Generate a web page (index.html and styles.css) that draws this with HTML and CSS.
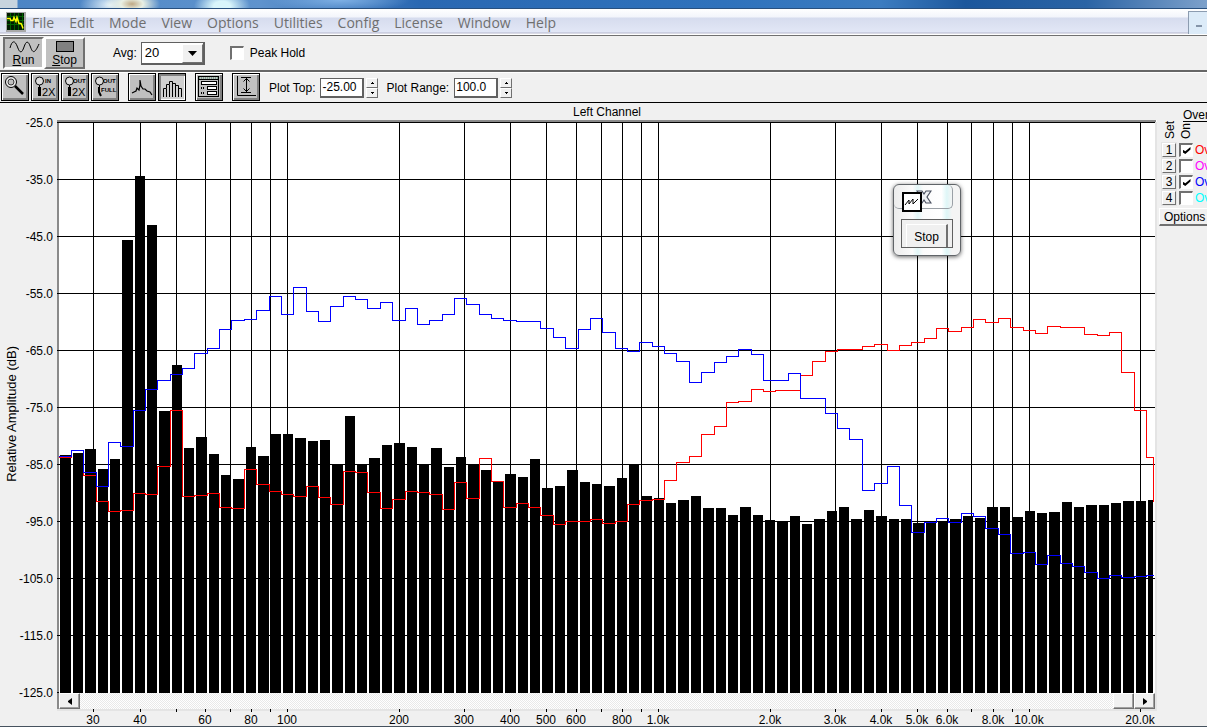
FILE: index.html
```html
<!DOCTYPE html>
<html lang="en">
<head>
<meta charset="utf-8">
<title>Spectrum Analyzer</title>
<link rel="stylesheet" href="styles.css">
</head>
<body>
<div class="app">
  <div class="titlebar"></div>
  <nav class="menubar">
    <svg class="app-icon" width="20" height="20" viewBox="0 0 20 20" aria-hidden="true">
      <rect width="20" height="20" fill="#a8a8a8"/><rect x="1" y="1" width="17" height="17" fill="#001a00"/>
      <path d="M4.500 1v17M8.500 1v17M12.500 1v17M16.500 1v17M1 4.500h17M1 8.500h17M1 12.500h17" stroke="#006000" fill="none"/>
      <path d="M1 6.500h3l1 2h2l1 -3l2 4l1 -4l2 6h2l1 2l1 3" stroke="#ffff00" stroke-width="1.500" fill="none"/>
    </svg>
    <a href="#file">File</a><a href="#edit">Edit</a><a href="#mode">Mode</a><a href="#view">View</a><a href="#options">Options</a><a href="#utilities">Utilities</a><a href="#config">Config</a><a href="#license">License</a><a href="#window">Window</a><a href="#help">Help</a>
    <button class="minimize" aria-label="Minimize"><span></span></button>
  </nav>

  <div class="toolbar run-bar">
    <button class="big-btn pressed">
      <svg width="32" height="15" viewBox="0 0 32 15" aria-hidden="true"><path d="M2 9C4 1 7 1 9.500 8S14 14 16 8S20 1 22.500 8S27 14 31 5" fill="none" stroke="#000"/></svg>
      <span><u>R</u>un</span>
    </button>
    <button class="big-btn">
      <svg width="32" height="15" viewBox="0 0 32 15" aria-hidden="true"><rect x="7.500" y="2.500" width="17" height="10" fill="#808080" stroke="#000"/></svg>
      <span><u>S</u>top</span>
    </button>
    <label class="avg-label" for="avg">Avg:</label>
    <span class="combo">
      <select id="avg"><option>20</option></select>
      <span class="combo-arrow"><svg width="9" height="5" viewBox="0 0 9 5"><path d="M0 0h9L4.500 5z"/></svg></span>
    </span>
    <label class="peak"><input type="checkbox" class="check">Peak Hold</label>
  </div>

  <div class="toolbar tool-bar">
    <div class="group">
      <button class="tool" aria-label="Zoom"><svg viewBox="0 0 26 26"><circle cx="9" cy="8" r="5.500" fill="#e8e8e8" stroke="#000"/><circle cx="9" cy="8" r="3" fill="#c0c0c0" stroke="#000" stroke-width=".7"/><path d="M13 12l8 8" stroke="#000" stroke-width="2.500"/></svg></button>
      <button class="tool" aria-label="Zoom in 2X"><svg viewBox="0 0 26 26"><circle cx="7.500" cy="7" r="4" fill="#ddd" stroke="#000"/><path d="M7.500 11v3" stroke="#000"/><path d="M7.500 13v9" stroke="#000" stroke-width="3"/><text class="tiny" x="13" y="9">IN</text><text class="big" x="10" y="22">2X</text></svg></button>
      <button class="tool" aria-label="Zoom out 2X"><svg viewBox="0 0 26 26"><circle cx="7.500" cy="7" r="4" fill="#ddd" stroke="#000"/><path d="M7.500 11v3" stroke="#000"/><path d="M7.500 13v9" stroke="#000" stroke-width="3"/><text class="tiny" x="11" y="9">OUT</text><text class="big" x="10" y="22">2X</text></svg></button>
      <button class="tool" aria-label="Zoom out full"><svg viewBox="0 0 26 26"><circle cx="7.500" cy="7" r="4" fill="#ddd" stroke="#000"/><path d="M7.500 11v3" stroke="#000"/><path d="M7 13v5l2 4" stroke="#000" stroke-width="2" fill="none"/><text class="tiny" x="11" y="9">OUT</text><text class="tiny" x="9" y="18">FULL</text></svg></button>
    </div>
    <div class="group">
      <button class="tool" aria-label="Line plot"><svg viewBox="0 0 26 26"><path d="M3 19l2-1l2-1l1-3l2 2l1-5V6l1 6l2 3h2l2 2l3 1l2 3" fill="none" stroke="#000" stroke-width="1.200"/></svg></button>
      <button class="tool pressed" aria-label="Bar plot"><svg viewBox="0 0 26 26"><path d="M4.500 23V14.500H7.500V23M7.500 14V10.500H10.500V23M10.500 10V7.500H13.500V23M13.500 9.500H16.500V23M16.500 11.500H19.500V23M19.500 14.500H22.500V23" fill="none" stroke="#000"/></svg></button>
    </div>
    <div class="group">
      <button class="tool" aria-label="Settings"><svg viewBox="0 0 26 26"><rect x="2.500" y="2.500" width="20" height="20" fill="#c0c0c0" stroke="#000"/><path d="M3 4h19" stroke="#7f9f8f" stroke-width="2" stroke-dasharray="1 1"/><path d="M3 5.500h19" stroke="#000"/><g fill="#fff" stroke="#000"><rect x="5.500" y="7.500" width="15" height="3"/><rect x="11.500" y="12.500" width="9" height="3"/><rect x="11.500" y="17.500" width="9" height="3"/></g><path d="M5 14h4M5 19h4" stroke="#000" stroke-width="2" stroke-dasharray="1 1"/></svg></button>
    </div>
    <div class="group">
      <button class="tool" aria-label="Fit vertical range"><svg viewBox="0 0 26 26"><path d="M4.500 2V21.500H23M8 3.500H18M8 18.500H18M13.500 4v14M10.500 7.500l3-3l3 3M10.500 14.500l3 3l3-3" fill="none" stroke="#000"/></svg></button>
    </div>
    <div class="field">
      <label for="top">Plot Top:</label><input id="top" type="text" value="-25.00">
      <span class="spin"><button aria-label="Raise plot top"><svg width="3" height="2" viewBox="0 0 3 2"><path d="M1 0h1v1h1v1H0V1h1z"/></svg></button><button aria-label="Lower plot top"><svg width="3" height="2" viewBox="0 0 3 2"><path d="M0 0h3v1H2v1H1V1H0z"/></svg></button></span>
    </div>
    <div class="field">
      <label for="range">Plot Range:</label><input id="range" type="text" value="100.0">
      <span class="spin"><button aria-label="Raise plot range"><svg width="3" height="2" viewBox="0 0 3 2"><path d="M1 0h1v1h1v1H0V1h1z"/></svg></button><button aria-label="Lower plot range"><svg width="3" height="2" viewBox="0 0 3 2"><path d="M0 0h3v1H2v1H1V1H0z"/></svg></button></span>
    </div>
  </div>

  <main class="workspace">
    <div class="y-axis">
      <div class="y-title">Relative Amplitude (dB)</div>
      <div class="y-labels"><span>-25.0</span><span>-35.0</span><span>-45.0</span><span>-55.0</span><span>-65.0</span><span>-75.0</span><span>-85.0</span><span>-95.0</span><span>-105.0</span><span>-115.0</span><span>-125.0</span></div>
    </div>
    <section class="chart">
      <h1 class="chart-title">Left Channel</h1>
      <div class="plot"><svg id="plot" viewBox="57 120 1100 573" preserveAspectRatio="none" shape-rendering="crispEdges"></svg></div>
      <div class="scrollbar">
        <button class="scroll-btn" aria-label="Scroll left"><svg width="4" height="7" viewBox="0 0 4 7"><path d="M4 0v7L0 4V3z"/></svg></button>
        <div class="track"><div class="thumb"></div></div>
        <button class="scroll-btn" aria-label="Scroll right"><svg width="4" height="7" viewBox="0 0 4 7"><path d="M0 0v7l4-3V3z"/></svg></button>
      </div>
      <svg id="xaxis" class="x-axis"></svg>

      <div class="dialog" role="dialog" aria-label="Generator">
        <div class="dialog-title">
          <svg class="wave" width="20" height="20" viewBox="0 0 20 20" aria-hidden="true"><rect x="1" y="1" width="18" height="18" fill="#fff" stroke="#000" stroke-width="2"/><path d="M3 13l4-5v4l4-5v5l5-5" fill="none" stroke="#000"/></svg>
          <button class="close" aria-label="Close"><svg width="16" height="14" viewBox="0 0 16 14"><path d="M1 1h5l2 3l2-3h5l-4 6l4 6h-5l-2-3l-2 3H1l4-6z" fill="#eef0f4" stroke="#4a5060" stroke-width="1.200"/></svg></button>
        </div>
        <div class="dialog-body"><button>Stop</button></div>
      </div>
    </section>
    <aside class="overlays">
      <div class="ov-title">Over</div>
      <div class="ov-heads"><span>Set</span><span>On</span></div>
      <div class="ov-row"><button>1</button><label class="red"><input type="checkbox" class="check" checked>Ov</label></div>
      <div class="ov-row"><button>2</button><label class="magenta"><input type="checkbox" class="check">Ov</label></div>
      <div class="ov-row"><button>3</button><label class="blue"><input type="checkbox" class="check" checked>Ov</label></div>
      <div class="ov-row"><button>4</button><label class="cyan"><input type="checkbox" class="check">Ov</label></div>
      <button class="ov-options">Options</button>
    </aside>
  </main>
</div>
<script src="chart.js"></script>
</body>
</html>
```

FILE: styles.css
```css
* { box-sizing: border-box; }
body {
  margin: 0;
  background: #f0f0f0;
  color: #000;
  font: 12px/14px "Liberation Sans", Arial, sans-serif;
  overflow: hidden;
}
button, input, select { font: inherit; color: inherit; margin: 0; padding: 0; border-radius: 0; }
.app { display: flex; flex-direction: column; height: 100vh; border-bottom: 1px solid #46525e; }

.titlebar {
  flex: none;
  height: 9px;
  background:
    linear-gradient(90deg, #c8d4de 0 17px, transparent 18px),
    radial-gradient(ellipse 28px 14px at 132px 4px, #bfa985 0, #e9f0e4 40%, transparent 100%),
    radial-gradient(ellipse 30px 16px at 110px 5px, #e4f2fa 0, transparent 100%),
    radial-gradient(ellipse 28px 16px at 222px 6px, #d9f5fb 30%, transparent 100%),
    radial-gradient(ellipse 70px 12px at 340px 0, #7fb0e4 0, transparent 100%),
    linear-gradient(90deg, #4b84c4 0, #5f93cd 260px, #2a68b2 420px, #2f72bc 60%, #3c7cc0 73%, #1c579c 80%, #2b64a5 90%, #7da1cb 100%);
  border-bottom: 1px solid #28507f;
}

.menubar {
  flex: none;
  display: flex;
  align-items: center;
  height: 27px;
  padding-left: 6px;
  background: linear-gradient(#fff 0, #f3f5fb 8px, #d6dcee 9px, #e2e7f6 23px, #b4b6cc 24px, #fff 25px);
  border-bottom: 1px solid #707070;
}
.menubar a {
  padding: 2px 7px 0 8px;
  color: #6f6f6f;
  font: 14px/20px "Open Sans", "Noto Sans", sans-serif;
  text-decoration: none;
}
.app-icon { margin-right: -2px; }
.minimize {
  align-self: flex-start;
  width: 19px;
  height: 23px;
  margin: 2px 0 0 auto;
  padding: 6px 0 0 7px;
  background: #dcebf8;
  border: 1px solid #8c9cb0;
  border-width: 1px 0 0 1px;
}
.minimize span { display: block; width: 6px; height: 2px; background: #8494a8; }

.toolbar { flex: none; display: flex; align-items: center; }
.run-bar { height: 36px; padding: 0 3px; border-bottom: 2px solid #666; }
.tool-bar { height: 31px; padding-left: 1px; border-top: 1px solid #fff; border-bottom: 1px solid #000; align-items: flex-start; }
.big-btn {
  display: flex;
  flex-direction: column;
  align-items: center;
  width: 41px;
  height: 32px;
  background: #c0c0c0;
  border: 2px solid;
  border-color: #fff #707070 #707070 #fff;
}
.big-btn.pressed { border-color: #707070 #fff #fff #707070; }
.big-btn svg { flex: none; }
.big-btn span { line-height: 13px; }
.avg-label { margin: 0 4px 0 28px; }
.combo { position: relative; width: 64px; height: 23px; }
.combo select {
  appearance: none;
  width: 100%;
  height: 100%;
  padding-left: 3px;
  font-size: 13px;
  background: #fff;
  border: 1px solid #606060;
  border-width: 1px 2px 2px 1px;
}
.combo-arrow {
  position: absolute;
  top: 2px;
  right: 2px;
  display: grid;
  place-items: center;
  width: 21px;
  height: 19px;
  background: #f0f0f0;
  border: 1px solid;
  border-color: #fff #707070 #707070 #fff;
  pointer-events: none;
}
.peak { display: flex; align-items: center; gap: 6px; margin-left: 25px; }
.check {
  appearance: none;
  display: grid;
  place-items: center;
  flex: none;
  width: 14px;
  height: 14px;
  background: #fff;
  border: 1px solid;
  border-width: 2px 1px 1px 2px;
  border-color: #707070 #fff #fff #707070;
}
.check:checked::before {
  content: "";
  width: 8px;
  height: 7px;
  background: #000;
  clip-path: polygon(0 35%, 35% 60%, 100% 0, 100% 35%, 35% 100%, 0 75%);
}

.group { display: flex; gap: 2px; margin-right: 9px; }
.tool { width: 28px; height: 28px; background: #c0c0c0; border: 1px solid #000; box-shadow: inset 1px 1px #fff, inset -2px -2px #808080; }
.tool.pressed { box-shadow: inset 2px 2px #808080, inset -1px -1px #fff; background: #d0d0d0; }
.tool svg { display: block; width: 26px; height: 26px; }
.tiny { font-size: 6px; font-weight: bold; }
.big { font-size: 11px; }
.field { display: flex; align-items: center; align-self: center; margin-right: 8px; }
.field input { width: 44px; height: 20px; margin: 0 2px 0 5px; padding-left: 1px; background: #fff; border: 1px solid #606060; border-width: 1px 2px 2px 1px; }
.spin { display: flex; flex-direction: column; }
.spin button {
  display: grid;
  place-items: center;
  width: 12px;
  height: 10px;
  background: #f0f0f0;
  border: 1px solid;
  border-color: #fff #707070 #707070 #fff;
}

.workspace { flex: 1; display: grid; grid-template-columns: 57px minmax(0, 1fr) 50px; min-height: 0; }
.y-axis { display: flex; justify-content: space-between; padding: 13px 4px 26px 5px; }
.y-title { align-self: center; padding-bottom: 12px; writing-mode: vertical-rl; transform: rotate(180deg); font-size: 13px; line-height: 14px; white-space: nowrap; }
.y-labels { display: flex; flex-direction: column; justify-content: space-between; text-align: right; width: 34px; }
.y-labels span { align-self: flex-end; }

.chart { position: relative; display: flex; flex-direction: column; min-height: 0; }
.chart-title { flex: none; height: 17px; margin: 0; padding-top: 2px; font-size: 12px; font-weight: normal; line-height: 14px; text-align: center; }
.plot { flex: 1; min-height: 0; }
.plot svg { display: block; width: 100%; height: 100%; }
.scrollbar { flex: none; display: flex; height: 16px; border: 2px solid; border-width: 0 2px; border-color: #8a8a8a #e4e4e4 #e4e4e4 #8a8a8a; }
.scroll-btn, .thumb { display: grid; place-items: center; width: 21px; height: 16px; background: #f0f0f0; border: 1px solid; border-color: #fff #707070 #707070 #fff; box-shadow: inset -1px -1px #a0a0a0; }
.track { flex: 1; display: flex; justify-content: flex-end; background: repeating-conic-gradient(#e9e9e9 0 25%, #fff 0 50%) 0 0 / 2px 2px; }
.x-axis { flex: none; display: block; width: 100%; height: 17px; overflow: visible; }

.dialog {
  position: absolute;
  top: 81px;
  right: 196px;
  width: 68px;
  height: 72px;
  background: linear-gradient(90deg, #ececec, #fbfbfb 28%, #e2f6f7 36%, #fbfbfb 44%, #fff 72%, #def6f7 80%, #f4f4f4 88%);
  border: 1px solid #606468;
  border-radius: 6px;
  box-shadow: 0 1px 4px rgb(0 0 0 / 60%);
}
.dialog-title { display: flex; align-items: flex-start; width: 59px; height: 24px; border: 1px solid #9aa0a6; border-width: 0 1px 1px 0; border-radius: 5px; padding: 5px 0 0 8px; }
.wave { position: relative; z-index: 1; margin-top: 2px; margin-right: -6px; flex: none; }
.close { border: 0; background: none; line-height: 0; }
.dialog-body { width: 52px; height: 29px; margin: 10px 0 0 7px; padding: 4px 4px 0; background: #f0f0f0; border: 1px solid #606060; }
.dialog-body button { width: 42px; height: 23px; padding-top: 2px; background: #f0f0f0; border: 1px solid; border-width: 1px 2px 0 1px; border-color: #fff #707070 #707070 #fff; }

.overlays { overflow: hidden; padding: 5px 0 0 2px; }
.ov-title { margin-left: 24px; height: 14px; border-bottom: 1px solid #000; }
.ov-heads { display: flex; align-items: flex-end; gap: 2px; height: 17px; padding-left: 4px; margin-bottom: 3px; }
.ov-heads span { writing-mode: vertical-rl; transform: rotate(180deg); width: 14px; }
.ov-row { display: flex; align-items: center; gap: 3px; height: 16px; padding-left: 3px; }
.ov-row button { flex: none; width: 14px; height: 14px; line-height: 12px; background: #f0f0f0; border: 1px solid; border-color: #fff #707070 #707070 #fff; box-shadow: 0 0 0 1px #e4e4e4; }
.ov-row label { display: flex; align-items: center; gap: 2px; }
.red { color: #f00; }
.magenta { color: #f0f; }
.blue { color: #00f; }
.cyan { color: #0ff; }
.ov-options { display: block; width: 60px; height: 18px; margin-top: 2px; padding-left: 4px; text-align: left; background: #f0f0f0; border: 1px solid; border-width: 1px 2px 2px 1px; border-color: #fff #707070 #707070 #fff; }
```

FILE: chart.js
```js
const NS = "http://www.w3.org/2000/svg";
const LEFT = 57, RIGHT = 1157, BOTTOM = 693;

const bars = [455,453,449,469,459,240,176,225,411,365,448,437,454,475,479,447,456,434,434,438,441,440,464,416,464,458,445,443,447,464,448,467,457,464,470,482,474,477,459,488,486,470,482,484,486,478,464,496,498,503,500,496,508,508,515,507,515,520,521,516,524,519,511,507,519,510,516,519,519,523,521,521,519,516,518,507,507,517,511,513,512,502,507,505,505,503,501,501,500];
const blue = [456,450,472,486,442,446,410,389,380,374,368,353,348,329,320,319,310,296,314,287,311,321,306,296,299,308,302,320,308,324,320,314,298,304,314,318,320,321,321,328,337,348,329,318,332,348,351,342,346,353,361,382,372,362,356,349,354,380,380,373,398,398,413,428,439,490,483,466,505,532,522,518,522,513,516,528,534,553,552,564,555,563,566,572,578,575,577,576,575];
const red = [457,450,475,501,511,510,493,494,466,410,496,495,493,507,508,469,484,491,494,496,486,497,504,471,472,492,508,499,491,492,494,509,482,498,458,481,507,503,507,515,524,521,521,519,523,521,504,500,499,480,462,456,434,426,402,401,389,391,390,390,375,361,351,349,349,346,344,350,345,342,338,328,331,327,319,322,318,327,330,333,326,327,327,334,335,332,372,410,457];

const ticks = [[93,"30"],[140,"40"],[176],[205,"60"],[230],[251,"80"],[270],[287,"100"],[399,"200"],[464,"300"],[510,"400"],[546,"500"],[576,"600"],[601],[622,"800"],[641],[658,"1.0k"],[770,"2.0k"],[835,"3.0k"],[881,"4.0k"],[917,"5.0k"],[947,"6.0k"],[971],[993,"8.0k"],[1012],[1029,"10.0k"],[1140,"20.0k"]];

function add(parent, name, attrs, text) {
  const node = document.createElementNS(NS, name);
  for (const key in attrs) node.setAttribute(key, attrs[key]);
  if (text) node.textContent = text;
  parent.appendChild(node);
}

/* Right-hand edge of each frequency band. */
const edge = (i) => (i < 0 ? 58 : i >= bars.length - 1 ? 1153 : Math.floor(71.3 + 12.36 * i));

const plot = document.getElementById("plot");
const rect = (x, y, width, height, fill) => add(plot, "rect", { x, y, width, height, fill });
rect(LEFT, 120, 1100, 573, "#fff");
rect(LEFT, 120, 1099, 2, "#8a8a8a");
rect(LEFT, 120, 2, 573, "#8a8a8a");
rect(1155, 122, 2, 571, "#e4e4e4");
for (let y = 122; y < BOTTOM; y += 57) rect(LEFT, y, y === 692 ? 2 : 1098, 1, "#000");
ticks.forEach(([x]) => rect(x, 122, 1, 571, "#000"));
bars.forEach((y, i) => {
  const x = edge(i - 1) + 2;
  rect(x, y, edge(i) - x, BOTTOM - y, "#000");
});

function trace(levels, color, tail) {
  let d = `M59 ${levels[0] + 0.5}`;
  levels.forEach((y, i) => { d += `V${y + 0.5}H${edge(i) + 0.5}`; });
  if (tail) d += `V${tail}`;
  add(plot, "path", { d, fill: "none", stroke: color, "stroke-width": 1 });
}
trace(red, "#f00", 502);
trace(blue, "#00f");

const axis = document.getElementById("xaxis");
add(axis, "rect", { x: 0, y: 0, width: "100%", height: 2, fill: "#e4e4e4" });
ticks.forEach(([x, label]) => {
  const at = `${((x - LEFT) / (RIGHT - LEFT)) * 100}%`;
  add(axis, "rect", { x: at, y: 0, width: 1, height: 3, fill: "#000" });
  if (label) add(axis, "text", { x: at, y: 15, "text-anchor": "middle" }, label);
});
```
